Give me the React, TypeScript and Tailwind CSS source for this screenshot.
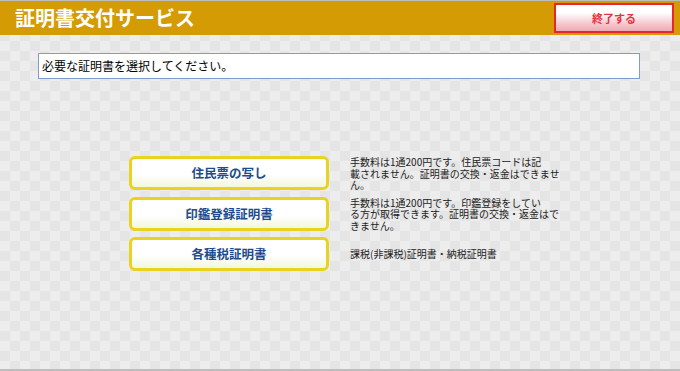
const JP = "font-['Noto_Sans_CJK_JP','Noto_Sans',sans-serif]";

const ITEMS = [
  {
    label: '住民票の写し',
    desc: '手数料は1通200円です。住民票コードは記\n載されません。証明書の交換・返金はできませ\nん。',
  },
  {
    label: '印鑑登録証明書',
    desc: '手数料は1通200円です。印鑑登録をしてい\nる方が取得できます。証明書の交換・返金はで\nきません。',
  },
  {
    label: '各種税証明書',
    desc: '課税(非課税)証明書・納税証明書',
  },
];

export default function App() {
  return (
    <div
      className={`w-[680px] h-[371px] flex flex-col border-t border-b-2 border-[#bdbdbd] ${JP} bg-[#ebebeb] bg-[repeating-conic-gradient(#e5e5e5_0%_25%,#ededed_0%_50%)] bg-[length:20px_20px]`}
    >
      {/* Header */}
      <div className="h-[34px] shrink-0 bg-[#d49b05] flex items-center justify-between pl-[15px] pr-[6px]">
        <h1 className="text-white font-bold text-[20px] leading-none">
          証明書交付サービス
        </h1>
        <button className="w-[120px] h-[30px] border-2 border-[#e6252c] bg-[linear-gradient(to_bottom,#ffffff_0%,#ffffff_30%,#f7d0d6_65%,#efa9b5_100%)] text-[#e2343e] font-bold text-[11px] leading-none flex items-center justify-center">
          終了する
        </button>
      </div>

      {/* Body */}
      <div className="flex-1 flex flex-col pl-[38px] pt-[18px]">
        <div className="w-[602px] h-[26px] bg-white border border-[#7e9ccf] flex items-center pl-[3px] text-[12px] text-black leading-none">
          必要な証明書を選択してください。
        </div>

        <div className="mt-[77px] ml-[91px] flex flex-col gap-[6px]">
          {ITEMS.map((it) => (
            <div key={it.label} className="flex items-center gap-[21px]">
              <button className="w-[200px] h-[34px] shrink-0 rounded-[6px] border-[3px] border-[#e8d31f] bg-[linear-gradient(to_bottom,#ffffff_0%,#ffffff_55%,#f3f7dc_100%)] text-[#1d4c8c] font-bold text-[12.5px] leading-none flex items-center justify-center">
                {it.label}
              </button>
              <p className="text-[10px] leading-[11.5px] text-[#222] whitespace-pre-line">
                {it.desc}
              </p>
            </div>
          ))}
        </div>
      </div>
    </div>
  );
}
